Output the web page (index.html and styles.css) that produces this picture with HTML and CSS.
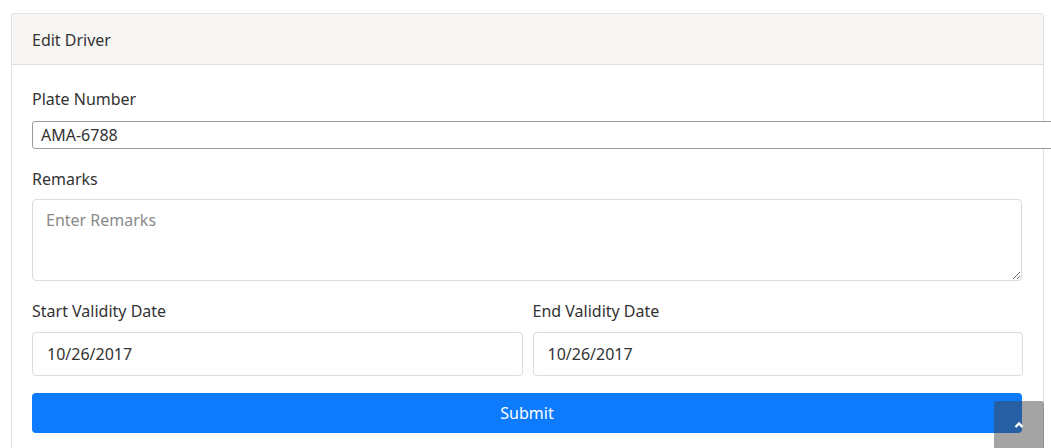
FILE: index.html
```html
<!DOCTYPE html>
<html>
<head>
<meta charset="utf-8">
<link rel="stylesheet" href="styles.css">
</head>
<body>
<div class="page">
  <div class="card">
    <div class="card-header">Edit Driver</div>
    <div class="card-body">
      <div class="group first">
        <label class="label">Plate Number</label>
        <input class="plain-input" type="text" value="AMA-6788">
      </div>
      <div class="group">
        <label class="label">Remarks</label>
        <textarea class="remarks" placeholder="Enter Remarks"></textarea>
      </div>
      <div class="row">
        <div class="col">
          <label class="label">Start Validity Date</label>
          <input class="field" type="text" value="10/26/2017">
        </div>
        <div class="col">
          <label class="label">End Validity Date</label>
          <input class="field" type="text" value="10/26/2017">
        </div>
      </div>
      <button class="submit" type="button">Submit</button>
    </div>
  </div>
</div>
<a class="to-top" href="#">
  <svg width="10" height="8" viewBox="0 0 10 8"><path d="M1.5 6 L5 2.5 L8.5 6" fill="none" stroke="#fff" stroke-width="2.4"/></svg>
</a>
</body>
</html>
```

FILE: styles.css
```css
html, body {
  margin: 0;
  padding: 0;
  overflow: hidden;
  height: 100%;
  background: #fff;
}
body {
  font-family: "Noto Sans", "Open Sans", sans-serif;
  font-size: 16px;
  color: #333;
}
.page {
  padding: 13px 0 0 11px;
}
.card {
  width: 1033px;
  box-sizing: border-box;
  border: 1px solid #e2e2e2;
  border-bottom: 0;
  border-radius: 4px 4px 0 0;
  height: 435px;
}
.card-header {
  background: #f7f6f5;
  border-bottom: 1px solid #dedede;
  border-radius: 4px 4px 0 0;
  height: 51px;
  box-sizing: border-box;
  padding: 14px 20px 0;
  line-height: 24px;
  font-size: 16px;
}
.card-body {
  padding: 22px 20px 0;
}
.group {
  display: flex;
  flex-direction: column;
  margin-bottom: 18px;
}
.label {
  display: block;
  line-height: 24px;
  margin-bottom: 8px;
}
.group.first .label {
  margin-bottom: 10px;
}
.plain-input {
  width: 1040px;
  height: 28px;
  box-sizing: border-box;
  border: 1px solid #9a9a9a;
  border-radius: 3px;
  padding: 0 8px;
  font: inherit;
  color: #333;
  outline: none;
}
.remarks {
  width: 990px;
  height: 82px;
  box-sizing: border-box;
  border: 1px solid #dcdcdc;
  border-radius: 4px;
  padding: 8px 13px;
  font: inherit;
  line-height: 24px;
  color: #333;
  resize: vertical;
  outline: none;
}
.remarks::placeholder {
  color: #8a8a8a;
}
.row {
  display: flex;
  gap: 10px;
  margin-bottom: 17px;
}
.col {
  flex: 1;
  display: flex;
  flex-direction: column;
}
.col .label {
  margin-bottom: 9px;
}
.field {
  height: 44px;
  box-sizing: border-box;
  border: 1px solid #dcdcdc;
  border-radius: 4px;
  padding: 0 14px;
  font: inherit;
  color: #333;
  outline: none;
}
.submit {
  display: block;
  width: 990px;
  height: 40px;
  border: 0;
  border-radius: 4px;
  background: #0e7bfd;
  color: #fff;
  font: inherit;
  font-size: 16px;
}
.to-top {
  position: fixed;
  left: 994px;
  top: 401px;
  width: 50px;
  height: 47px;
  border-radius: 3px 3px 0 0;
  background: rgba(64, 64, 64, 0.48);
  display: flex;
  justify-content: center;
  padding-top: 20px;
  box-sizing: border-box;
}
.to-top svg {
  display: block;
}
```
